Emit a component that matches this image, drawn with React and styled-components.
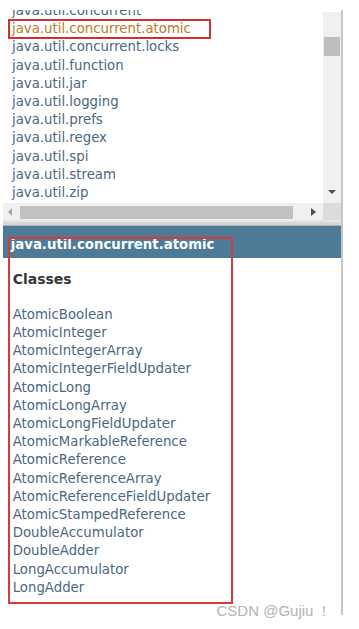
import React from "react";
import styled, { createGlobalStyle, css } from "styled-components";

const GlobalStyle = createGlobalStyle`
  html, body { margin: 0; padding: 0; background: #ffffff; }
  body { font-family: "DejaVu Sans", "Noto Sans", sans-serif; }
  * { box-sizing: border-box; }
`;

const Page = styled.div`
  position: relative;
  width: 359px;
  height: 629px;
  overflow: hidden;
  padding-top: 10px;
  background: #fff;
`;

const Frame = styled.div`
  margin-left: 3px;
  width: 340px;
  border-right: 2px solid #c6c6c6;
  display: flex;
  flex-direction: column;
  padding-bottom: 18px;
`;

const TopPane = styled.div`
  display: grid;
  grid-template-columns: 1fr 18px;
  grid-template-rows: 193px 17px;
`;

const ListViewport = styled.div`
  overflow: hidden;
  padding-left: 9px;
`;

const PackageList = styled.ul`
  list-style: none;
  margin: -8px 0 0;
  padding: 0;
`;

const PackageItem = styled.li`
  position: relative;
  font-size: 13.3px;
  line-height: 18.2px;
  white-space: nowrap;
  color: ${(p) => (p.$marked ? "#bb7a2a" : "#4a6782")};
  ${(p) =>
    p.$marked &&
    css`
      &::after {
        content: "";
        position: absolute;
        top: -1.4px;
        bottom: -0.6px;
        left: -4.3px;
        width: 199px;
        border: 2px solid #d22f2f;
      }
    `}
`;

const VScroll = styled.div`
  margin-top: 2px;
  background: #f0f0f0;
  display: flex;
  flex-direction: column;
  align-items: center;
  padding-top: 25px;
  padding-bottom: 9px;
`;

const VThumb = styled.div`
  width: 16px;
  height: 19px;
  background: #bdbdbd;
`;

const Arrow = styled.div`
  width: 0;
  height: 0;
  ${(p) =>
    p.$dir === "down" &&
    css`
      margin-top: auto;
      border-left: 4px solid transparent;
      border-right: 4px solid transparent;
      border-top: 4px solid #4f4f4f;
    `}
  ${(p) =>
    p.$dir === "left" &&
    css`
      border-top: 4px solid transparent;
      border-bottom: 4px solid transparent;
      border-right: 4px solid #a8a8a8;
    `}
  ${(p) =>
    p.$dir === "right" &&
    css`
      border-top: 4px solid transparent;
      border-bottom: 4px solid transparent;
      border-left: 5px solid #4f4f4f;
    `}
`;

const HScroll = styled.div`
  background: #f0f0f0;
  display: flex;
  align-items: center;
  padding: 0 7px 0 5px;
`;

const HThumb = styled.div`
  flex: 1;
  height: 13px;
  margin: 2px 18px 0 8px;
  background: #c1c1c1;
`;

const Corner = styled.div`
  background: #dcdcdc;
`;

const Divider = styled.div`
  height: 6px;
  background: #d6d6d6;
  border-top: 2px solid #e6e6e6;
  border-bottom: 1px solid #b3b3b3;
`;

const BottomPane = styled.div`
  position: relative;
`;

const Header = styled.div`
  background: #4d7a97;
  color: #ffffff;
  font-weight: bold;
  font-size: 13.3px;
  line-height: 18.2px;
  padding: 9.5px 0 4.5px 7.7px;
  white-space: nowrap;
`;

const Content = styled.div`
  padding: 0 0 0 9.7px;
`;

const SectionTitle = styled.h2`
  margin: 11.5px 0 0;
  font-size: 14px;
  line-height: 18px;
  font-weight: bold;
  color: #353833;
`;

const ClassList = styled.ul`
  list-style: none;
  margin: 18px 0 0;
  padding: 0;
`;

const ClassItem = styled.li`
  font-size: 13.3px;
  line-height: 18.2px;
  color: #4a6782;
  white-space: nowrap;
`;

const Annotation = styled.div`
  position: absolute;
  left: 5px;
  top: 11px;
  width: 225px;
  height: 367px;
  border: 2px solid #d63a3a;
  pointer-events: none;
`;

const Watermark = styled.div`
  position: absolute;
  left: 216.5px;
  top: 601.5px;
  font-family: "Liberation Sans", "Noto Sans CJK SC", sans-serif;
  font-size: 15px;
  line-height: 18px;
  color: #b3b3b3;
  white-space: pre;
`;

const packages = [
  "java.util.concurrent",
  "java.util.concurrent.atomic",
  "java.util.concurrent.locks",
  "java.util.function",
  "java.util.jar",
  "java.util.logging",
  "java.util.prefs",
  "java.util.regex",
  "java.util.spi",
  "java.util.stream",
  "java.util.zip",
];

const classes = [
  "AtomicBoolean",
  "AtomicInteger",
  "AtomicIntegerArray",
  "AtomicIntegerFieldUpdater",
  "AtomicLong",
  "AtomicLongArray",
  "AtomicLongFieldUpdater",
  "AtomicMarkableReference",
  "AtomicReference",
  "AtomicReferenceArray",
  "AtomicReferenceFieldUpdater",
  "AtomicStampedReference",
  "DoubleAccumulator",
  "DoubleAdder",
  "LongAccumulator",
  "LongAdder",
];

export default function App() {
  return (
    <Page>
      <GlobalStyle />
      <Frame>
        <TopPane>
          <ListViewport>
            <PackageList>
              {packages.map((p) => (
                <PackageItem key={p} $marked={p === "java.util.concurrent.atomic"}>
                  {p}
                </PackageItem>
              ))}
            </PackageList>
          </ListViewport>
          <VScroll>
            <VThumb />
            <Arrow $dir="down" />
          </VScroll>
          <HScroll>
            <Arrow $dir="left" />
            <HThumb />
            <Arrow $dir="right" />
          </HScroll>
          <Corner />
        </TopPane>
        <Divider />
        <BottomPane>
          <Header>java.util.concurrent.atomic</Header>
          <Content>
            <SectionTitle>Classes</SectionTitle>
            <ClassList>
              {classes.map((c) => (
                <ClassItem key={c}>{c}</ClassItem>
              ))}
            </ClassList>
          </Content>
          <Annotation />
        </BottomPane>
      </Frame>
      <Watermark>{"CSDN @Gujiu  !"}</Watermark>
    </Page>
  );
}
